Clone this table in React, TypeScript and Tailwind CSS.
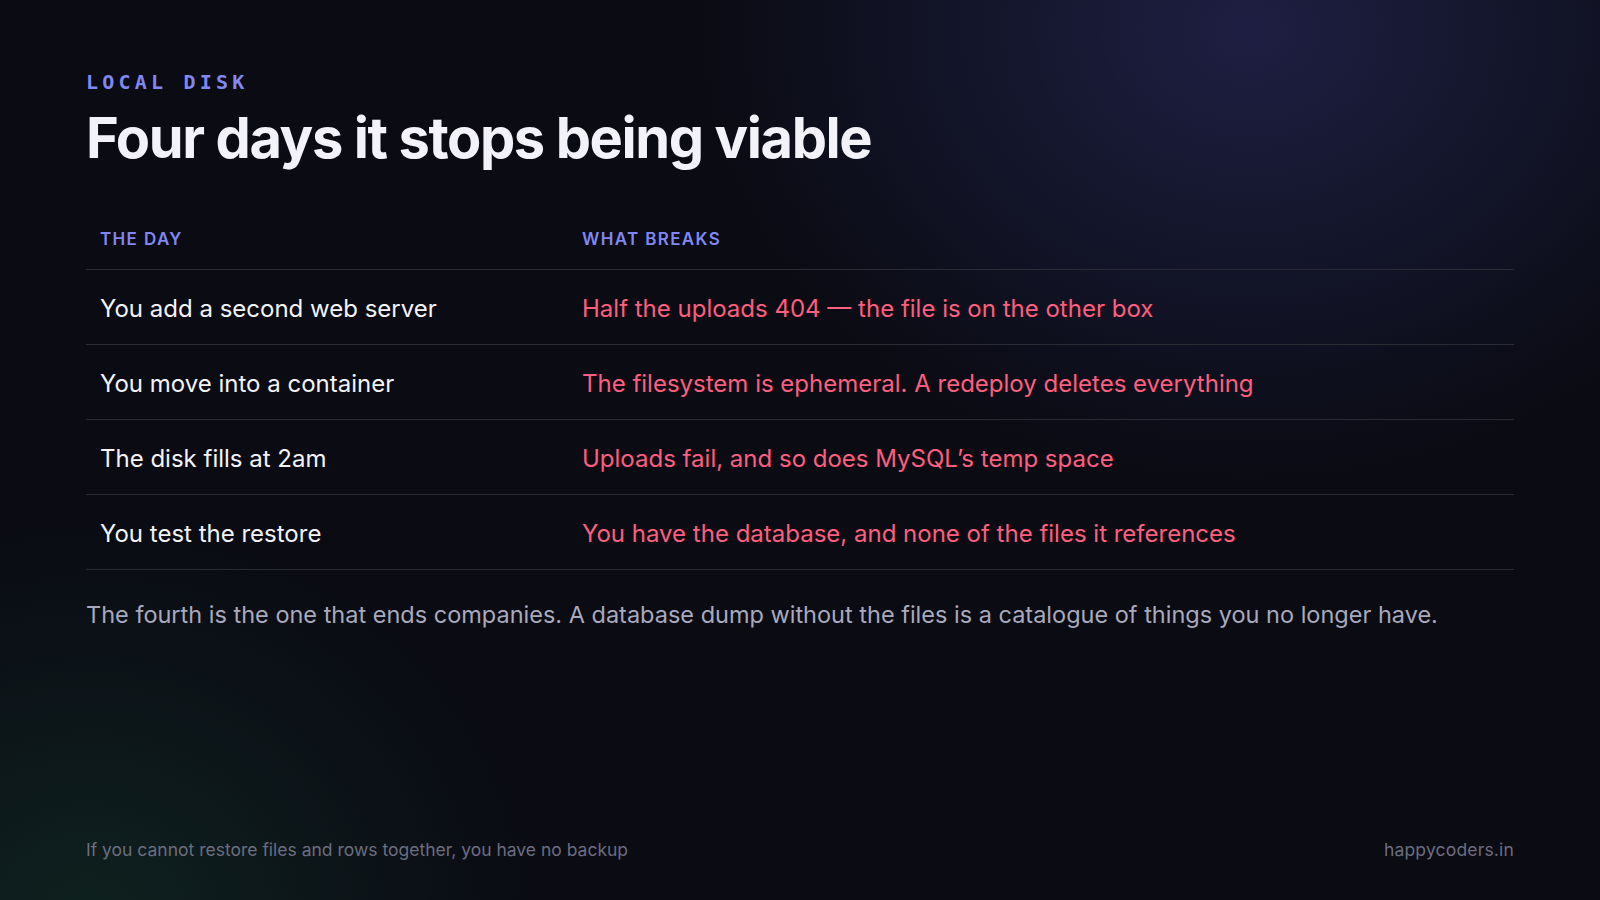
const rows = [
  ['You add a second web server', 'Half the uploads 404 \u2014 the file is on the other box'],
  ['You move into a container', 'The filesystem is ephemeral. A redeploy deletes everything'],
  ['The disk fills at 2am', "Uploads fail, and so does MySQL\u2019s temp space"],
  ['You test the restore', 'You have the database, and none of the files it references'],
];

export default function App() {
  return (
    <div
      className="relative flex h-[900px] w-[1600px] flex-col overflow-hidden bg-[#0a0b13] px-[86px] font-['Inter',sans-serif] text-[#f1f1f7]"
    >
      <div className="pointer-events-none absolute -right-[200px] -top-[420px] h-[900px] w-[1100px] rounded-full bg-[radial-gradient(closest-side,rgba(36,38,82,0.75),rgba(10,11,19,0))]" />
      <div className="pointer-events-none absolute -bottom-[420px] -left-[360px] h-[800px] w-[900px] rounded-full bg-[radial-gradient(closest-side,rgba(20,60,45,0.45),rgba(10,11,19,0))]" />

      <div className="relative flex flex-1 flex-col">
        <div className="pt-[68px] font-['DejaVu_Sans_Mono',monospace] text-[20px] font-bold leading-[28px] tracking-[0.21em] text-[#8187f2]">
          LOCAL DISK
        </div>
        <h1 className="mt-[8px] text-[56px] font-bold leading-[68px] tracking-[-0.025em] text-[#f2f2f8]">
          Four days it stops being viable
        </h1>

        <div className="mt-[54px]">
          <div className="grid grid-cols-[482px_1fr] border-b border-[#2a2b33] pt-[1px] pb-[18px] text-[17px] font-semibold uppercase leading-[24px] tracking-[0.08em] text-[#8187f2]">
            <div className="px-[14px]">The day</div>
            <div className="px-[14px]">What breaks</div>
          </div>
          {rows.map(([day, breaks]) => (
            <div
              key={day}
              className="grid h-[75px] grid-cols-[482px_1fr] items-center border-b border-[#2a2b33] pt-[3px] text-[24px] leading-[32px]"
            >
              <div className="px-[14px] text-[#f4f4f8]">{day}</div>
              <div className="px-[14px] text-[#ff5e7e]">{breaks}</div>
            </div>
          ))}
        </div>

        <p className="mt-[29px] text-[23.5px] leading-[32px] text-[#a9a9bd]">
          The fourth is the one that ends companies. A database dump without the files is a catalogue of things you no longer have.
        </p>
      </div>

      <div className="relative flex items-center justify-between pb-[38px] text-[17.5px] leading-[24px] text-[#6c6d80]">
        <span>If you cannot restore files and rows together, you have no backup</span>
        <span className="tracking-[0.01em]">happycoders.in</span>
      </div>
    </div>
  );
}
